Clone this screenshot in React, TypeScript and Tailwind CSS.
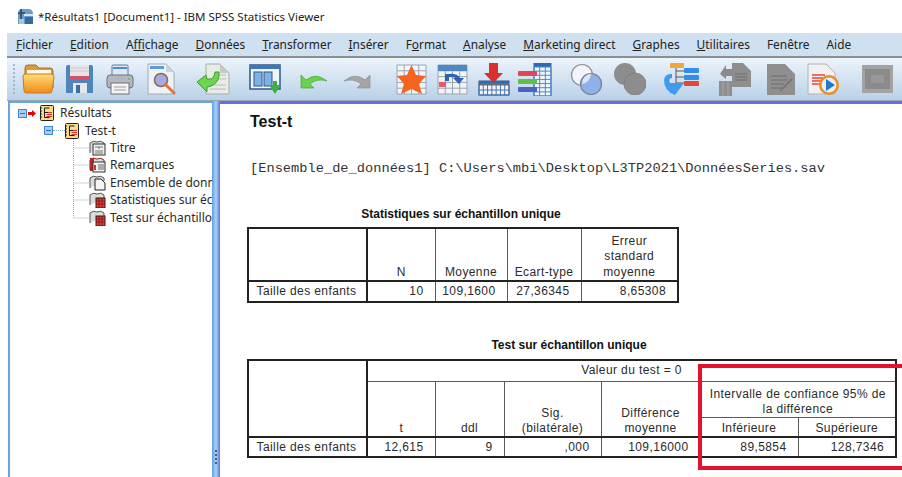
import React from "react";

const menus: [string, string, string][] = [
  ["", "F", "ichier"],
  ["", "E", "dition"],
  ["A", "f", "fichage"],
  ["", "D", "onnées"],
  ["", "T", "ransformer"],
  ["", "I", "nsérer"],
  ["F", "o", "rmat"],
  ["", "A", "nalyse"],
  ["", "M", "arketing direct"],
  ["", "G", "raphes"],
  ["", "U", "tilitaires"],
  ["Fenêtre", "", ""],
  ["Aide", "", ""],
];

const AppIcon = () => (
  <svg width="17" height="17" viewBox="0 0 17 17">
    <path d="M1 16 V5 Q1 1 6 1 H11 Q16 1 16 6 V16 Z" fill="#6f9cc0" />
    <path d="M1 5 H8 M4 1 V11" stroke="#1f4a72" strokeWidth="1.6" />
    <rect x="7" y="6" width="9" height="2" fill="#d6e6f2" />
    <rect x="8" y="9" width="8" height="7" fill="#2f6d9c" />
    <rect x="2" y="11" width="5" height="5" fill="#a9c6dc" />
  </svg>
);

const FolderIcon = () => (
  <svg width="33" height="30" viewBox="0 0 33 30">
    <defs>
      <linearGradient id="folderFront" x1="0" y1="0" x2="0" y2="1">
        <stop offset="0" stopColor="#ffdc7a" />
        <stop offset="1" stopColor="#f08a18" />
      </linearGradient>
    </defs>
    <path d="M3 24 V4 Q3 1 6 1 H14 L17 4 H28 Q31 4 31 7 V24 Z" fill="#d99a3a" stroke="#a8721f" />
    <rect x="5" y="6" width="24" height="6" fill="#fff8e8" />
    <path d="M1 12 Q1 10 4 10 H29 Q32 10 32 13 L30 27 Q30 29 27 29 H5 Q2 29 2 27 Z" fill="url(#folderFront)" stroke="#c97a1e" />
  </svg>
);

const SaveIcon = () => (
  <svg width="27" height="28" viewBox="0 0 27 28">
    <path d="M0 2 Q0 0 2 0 H25 Q27 0 27 2 V28 H0 Z" fill="#4f86b8" />
    <rect x="4" y="0" width="19" height="13" fill="#e6e6e6" />
    <path d="M4 3 H23 M4 6 H23" stroke="#c9c9c9" />
    <rect x="4" y="11" width="19" height="3" fill="#d8506a" />
    <rect x="7" y="18" width="14" height="10" fill="#e4e8ee" />
    <rect x="10" y="20" width="4" height="8" fill="#3d6f9e" />
  </svg>
);

const PrinterIcon = () => (
  <svg width="28" height="31" viewBox="0 0 28 31">
    <rect x="6" y="1" width="16" height="12" rx="1" fill="#dbe9f7" stroke="#5d7d9c" />
    <path d="M7 4 H21" stroke="#4d8fd0" strokeWidth="2" />
    <rect x="1" y="11" width="26" height="13" rx="3" fill="#b4b8bc" stroke="#6f7377" />
    <circle cx="23" cy="15" r="1" fill="#5fbf5f" />
    <rect x="5" y="19" width="18" height="11" fill="#f4f4f4" stroke="#6f7377" />
    <path d="M8 23 H20 M8 26 H20" stroke="#9a9a9a" />
  </svg>
);

const PreviewIcon = () => (
  <svg width="30" height="32" viewBox="0 0 30 32">
    <path d="M1 1 H19 L27 9 V31 H1 Z" fill="#eef2f6" stroke="#a3abb4" />
    <path d="M19 1 V9 H27 Z" fill="#cbd3dc" />
    <rect x="3" y="3" width="14" height="3" fill="#5a9bd8" />
    <circle cx="14" cy="17" r="6.5" fill="#a8a8e8" stroke="#8a6f50" strokeWidth="1.6" />
    <path d="M19 22 L27 30" stroke="#e2733a" strokeWidth="3" strokeLinecap="round" />
  </svg>
);

const ExportIcon = () => (
  <svg width="35" height="32" viewBox="0 0 35 32">
    <path d="M10 1 H24 L33 10 V31 H10 Z" fill="#e8ebe6" stroke="#a9ada6" />
    <path d="M24 1 V10 H33 Z" fill="#c6cac3" />
    <path d="M22 12 H30 M22 16 H30 M14 26 H30 M14 22 H30" stroke="#bcbcbc" />
    <path d="M1 19 L10 12 L11 16 H14 Q18 16 19 9 L23 9 Q24 18 17 22 Q14 24 11 24 L11 29 Z" fill="#6ed44f" stroke="#3aa02c" />
  </svg>
);

const WindowIcon = () => (
  <svg width="33" height="31" viewBox="0 0 33 31">
    <rect x="1" y="1" width="30" height="24" fill="#eef5fc" stroke="#31568a" strokeWidth="1.5" />
    <rect x="1" y="1" width="30" height="4" fill="#3f76b8" />
    <rect x="5" y="8" width="8" height="14" fill="#7fb2e6" stroke="#31568a" />
    <rect x="15" y="8" width="8" height="14" fill="#7fb2e6" stroke="#31568a" />
    <path d="M20 21 H24 V17 H28 V21 H32 L26 30 Z" fill="#3cb043" />
  </svg>
);

const UndoIcon = () => (
  <svg width="28" height="16" viewBox="0 0 28 16">
    <path d="M1 15 V2 L6 7 Q16 -1 27 8 Q17 5 10 11 L14 15 Z" fill="#67d24a" stroke="#46a832" strokeWidth="0.7" />
  </svg>
);

const RedoIcon = () => (
  <svg width="28" height="16" viewBox="0 0 28 16">
    <path d="M27 15 V2 L22 7 Q12 -1 1 8 Q11 5 18 11 L14 15 Z" fill="#a6a6a6" stroke="#8c8c8c" strokeWidth="0.7" />
  </svg>
);

// small grid shared by the table buttons
const GridLines = ({ x, y, w, h, cols, rows, stroke = "#7f93ad" }: { x: number; y: number; w: number; h: number; cols: number; rows: number; stroke?: string }) => (
  <g stroke={stroke} strokeWidth="1">
    {Array.from({ length: cols + 1 }, (_, i) => (
      <line key={`c${i}`} x1={x + (w / cols) * i} y1={y} x2={x + (w / cols) * i} y2={y + h} />
    ))}
    {Array.from({ length: rows + 1 }, (_, i) => (
      <line key={`r${i}`} x1={x} y1={y + (h / rows) * i} x2={x + w} y2={y + (h / rows) * i} />
    ))}
  </g>
);

const StarTableIcon = () => (
  <svg width="31" height="31" viewBox="0 0 31 31">
    <rect x="1" y="1" width="29" height="29" fill="#f2f4f6" />
    <GridLines x={1} y={1} w={29} h={29} cols={4} rows={5} stroke="#9aa5b2" />
    <path d="M15.5 1 L20 11 L30 12 L23 20 L26 30 L15.5 25 L5 30 L8 20 L1 12 L11 11 Z" fill="#f4641e" />
  </svg>
);

const SwapTableIcon = () => (
  <svg width="32" height="31" viewBox="0 0 32 31">
    <rect x="1" y="1" width="29" height="29" fill="#f2f4f6" />
    <GridLines x={1} y={1} w={29} h={29} cols={4} rows={5} stroke="#9aa5b2" />
    <rect x="1" y="1" width="29" height="6" fill="#4f86c6" />
    <rect x="2" y="18" width="7" height="5" fill="#ef5a6a" />
    <path d="M8 17 V10 H11 Q20 9 23 14 H27 L22 20 L16 14 H19 Q17 13 12 13 V17 Z" fill="#2f62b4" />
  </svg>
);

const ArrowTableIcon = () => (
  <svg width="32" height="33" viewBox="0 0 32 33">
    <rect x="1" y="18" width="30" height="14" fill="#f4f7fa" stroke="#2e5b96" />
    <rect x="1" y="18" width="30" height="4" fill="#2f68b4" />
    <GridLines x={1} y={22} w={30} h={10} cols={7} rows={2} stroke="#4273b4" />
    <path d="M11 0 H20 V10 H25 L15.5 20 L6 10 H11 Z" fill="#d8302a" />
    <path d="M0 21 H31" stroke="#9a6b3a" />
  </svg>
);

const BarsTableIcon = () => (
  <svg width="34" height="33" viewBox="0 0 34 33">
    <rect x="16" y="0" width="17" height="33" fill="#f0f6fc" stroke="#2f68b4" />
    <rect x="16" y="0" width="17" height="4" fill="#2f68b4" />
    <GridLines x={16} y={4} w={17} h={29} cols={3} rows={7} stroke="#4a8ad4" />
    <rect x="0" y="8" width="19" height="5" rx="1" fill="#e2455c" />
    <rect x="0" y="16" width="19" height="5" rx="1" fill="#5cc04a" />
    <rect x="0" y="24" width="19" height="5" rx="1" fill="#4a62c8" />
  </svg>
);

const CirclesIcon = () => (
  <svg width="33" height="32" viewBox="0 0 33 32">
    <circle cx="12" cy="12" r="10.5" fill="#f1f4fa" stroke="#8d8d8d" strokeWidth="1.2" />
    <circle cx="21" cy="21" r="10.5" fill="#8fb1ea" stroke="#7b7f8c" strokeWidth="1.2" />
    <path d="M12 21 A10.5 10.5 0 0 1 21 10.5 A10.5 10.5 0 0 1 12 21" fill="#dce6f7" />
  </svg>
);

const GreyCirclesIcon = () => (
  <svg width="32" height="32" viewBox="0 0 32 32">
    <circle cx="11" cy="11" r="11" fill="#8d8d8d" />
    <circle cx="21" cy="21" r="11" fill="#8d8d8d" stroke="#777" strokeWidth="0.7" />
  </svg>
);

const TreeIcon = () => (
  <svg width="35" height="33" viewBox="0 0 35 33">
    <rect x="6" y="0" width="14" height="5" rx="1" fill="#f0a63c" />
    <path d="M12 5 V20 M12 8 H20 M12 14 H20 M12 20 H20" stroke="#555" />
    <rect x="20" y="5" width="15" height="5" rx="1" fill="#2f8ef0" />
    <rect x="20" y="12" width="15" height="5" rx="1" fill="#2f8ef0" />
    <rect x="20" y="18" width="15" height="5" rx="1" fill="#e2453c" />
    <path d="M0 17 Q1 10 8 11 V15 Q4 15 6 20 H20 L11 32 Q0 28 0 17 Z" fill="#3f9bf0" />
  </svg>
);

const GreyReportIcon = () => (
  <svg width="33" height="33" viewBox="0 0 33 33">
    <path d="M14 0 H25 L33 8 V24 H14 Z" fill="#8e8e8e" />
    <path d="M2 11 L8 2 V6 H14 V13 H8 V16 Z" fill="#8a8a8a" />
    <rect x="1" y="18" width="13" height="15" fill="#8e8e8e" />
    <path d="M5 18 V33 M10 18 V33" stroke="#a9a9a9" />
    <path d="M17 11 H29 M17 14 H29 M17 17 H29" stroke="#6f6f6f" />
  </svg>
);

const GreyDocIcon = () => (
  <svg width="30" height="33" viewBox="0 0 30 33">
    <path d="M1 1 H19 L29 11 V32 H1 Z" fill="#8f8f8f" />
    <path d="M5 13 H21 M5 17 H21 M5 21 H18 M5 25 H16" stroke="#6c6c6c" />
    <path d="M14 28 L26 16" stroke="#777" strokeWidth="2" />
  </svg>
);

const PlayDocIcon = () => (
  <svg width="33" height="33" viewBox="0 0 33 33">
    <path d="M1 1 H19 L28 10 V31 H1 Z" fill="#f1f1f1" stroke="#b4b4b4" />
    <path d="M5 12 H18 M5 15 H20 M5 18 H14 M5 21 H14" stroke="#e2453c" strokeWidth="1.4" />
    <circle cx="22" cy="22" r="10" fill="#ee8a20" />
    <circle cx="22" cy="22" r="7.5" fill="#e8eef4" />
    <path d="M19 16 L28 22 L19 28 Z" fill="#1f7ad0" />
  </svg>
);

const GreyFrameIcon = () => (
  <svg width="31" height="28" viewBox="0 0 31 28">
    <rect x="0" y="0" width="31" height="28" fill="#a3a3a3" />
    <rect x="3" y="4" width="25" height="20" fill="#8b8b8b" />
    <rect x="9" y="10" width="13" height="8" fill="#979797" />
  </svg>
);

const OutlineBook = () => (
  <svg width="14" height="16" viewBox="0 0 14 16" className="shrink-0">
    <rect x="0.5" y="0.5" width="13" height="15" rx="1" fill="#f8dc8c" stroke="#222" />
    <path d="M1 3 H2 M1 6 H2 M1 9 H2 M1 12 H2" stroke="#222" />
    <path d="M4.5 3 H9.5 M4.5 3 V12.5 M4.5 7.5 H8 M4.5 12.5 H9.5" stroke="#1c1c1c" />
    <path d="M6.5 9.5 H12 M6.5 11.5 H12 M8 7.5 H12" stroke="#d8322c" />
  </svg>
);

const Expander = () => (
  <svg width="9" height="9" viewBox="0 0 9 9" className="shrink-0">
    <rect x="0.5" y="0.5" width="8" height="8" fill="#a9cdf0" stroke="#3f86cf" />
    <path d="M2 4.5 H7" stroke="#2d6fb8" />
  </svg>
);

const RedArrow = () => (
  <svg width="8" height="7" viewBox="0 0 8 7" className="shrink-0">
    <path d="M0 2 H4 V0 L8 3.5 L4 7 V5 H0 Z" fill="#f00000" />
  </svg>
);

// open-book base with a page or table laid over it
const LeafIcon = ({ kind }: { kind: "title" | "notes" | "log" | "table" }) => (
  <svg width="17" height="16" viewBox="0 0 17 16" className="shrink-0">
    <path d="M1 13 V3 Q4 0 8 2 Q12 0 15 3 V6" fill="#dcdcdc" stroke={kind === "notes" ? "#8a1c1c" : "#555"} />
    {kind === "title" && (
      <g>
        <rect x="4" y="4" width="12" height="11" fill="#efefef" stroke="#333" />
        <path d="M6 7 H14 M10 7 V9 M6 11 H14 M6 13 H14" stroke="#777" />
      </g>
    )}
    {kind === "notes" && (
      <g>
        <rect x="1" y="1" width="4" height="13" fill="#b3272a" />
        <rect x="4" y="5" width="12" height="10" fill="#f2f2f2" stroke="#333" />
        <path d="M6 8 V13" stroke="#d8322c" strokeWidth="2" />
        <path d="M9 8 H15 M9 10 H15 M9 12 H15" stroke="#666" />
      </g>
    )}
    {kind === "log" && <path d="M6 4 H12 L16 8 V15 H6 Z" fill="#f5f5f5" stroke="#222" />}
    {kind === "table" && (
      <g>
        <rect x="7" y="6" width="9" height="10" fill="#e23b36" stroke="#222" />
        <path d="M10 6 V16 M13 6 V16 M7 9 H16 M7 12 H16" stroke="#6d1412" strokeWidth="0.7" />
      </g>
    )}
  </svg>
);

const Connector = ({ last }: { last?: boolean }) => (
  <svg width="16" height="18" viewBox="0 0 16 18" className="shrink-0">
    <path d={last ? "M0.5 0 V9 H16" : "M0.5 0 V18 M0.5 9 H16"} stroke="#7fb0e2" strokeDasharray="1 1" fill="none" />
  </svg>
);

const leaves: { label: string; kind: "title" | "notes" | "log" | "table" }[] = [
  { label: "Titre", kind: "title" },
  { label: "Remarques", kind: "notes" },
  { label: "Ensemble de données actif", kind: "log" },
  { label: "Statistiques sur échantillon unique", kind: "table" },
  { label: "Test sur échantillon unique", kind: "table" },
];

const th = "border border-[#5a5a5a] px-[3px] align-bottom font-normal text-center";
const td = "border border-[#5a5a5a] border-t-2 border-t-[#222] pl-[4px] pr-[11px] text-right font-normal";
const rowHead = "border-r-2 border-r-[#222] border-t-2 border-t-[#222] pr-[2px] text-center font-normal whitespace-nowrap";

export default function App() {
  return (
    <div className="relative flex h-[477px] w-[902px] flex-col overflow-hidden bg-white font-['Noto_Sans',sans-serif] text-[12px] text-[#2b2b2b]">
      <div className="flex h-[33px] shrink-0 items-center gap-[4px] pl-[17px]">
        <AppIcon />
        <span className="text-[11.5px] text-[#222]">*Résultats1 [Document1] - IBM SPSS Statistics Viewer</span>
      </div>

      <div className="ml-[7px] flex h-[23px] shrink-0 items-center gap-[17px] bg-[#cfe0f0] pl-[9px] text-[11.9px] text-[#222]">
        {menus.map(([a, b, c]) => (
          <span key={a + b + c}>
            {a}
            <u>{b}</u>
            {c}
          </span>
        ))}
      </div>

      <div className="ml-[7px] flex h-[45px] shrink-0 items-center border-t-2 border-b border-t-[#8a8f96] border-b-[#9aa7b4] bg-gradient-to-b from-[#edf4fb] to-[#b9d1e8]">
        <div className="ml-[6px] h-[30px] w-0 border-l-2 border-dotted border-[#a9b6c4]" />
        <div className="ml-[7px]"><FolderIcon /></div>
        <div className="ml-[11px]"><SaveIcon /></div>
        <div className="ml-[13px]"><PrinterIcon /></div>
        <div className="ml-[13px]"><PreviewIcon /></div>
        <div className="ml-[19px]"><ExportIcon /></div>
        <div className="ml-[18px]"><WindowIcon /></div>
        <div className="ml-[18px] mt-[4px]"><UndoIcon /></div>
        <div className="ml-[15px] mt-[4px]"><RedoIcon /></div>
        <div className="ml-[25px]"><StarTableIcon /></div>
        <div className="ml-[10px]"><SwapTableIcon /></div>
        <div className="ml-[9px]"><ArrowTableIcon /></div>
        <div className="ml-[8px]"><BarsTableIcon /></div>
        <div className="ml-[18px]"><CirclesIcon /></div>
        <div className="ml-[11px]"><GreyCirclesIcon /></div>
        <div className="ml-[18px]"><TreeIcon /></div>
        <div className="ml-[19px]"><GreyReportIcon /></div>
        <div className="ml-[15px]"><GreyDocIcon /></div>
        <div className="ml-[11px]"><PlayDocIcon /></div>
        <div className="ml-[22px]"><GreyFrameIcon /></div>
      </div>

      <div className="flex min-h-0 flex-1 pl-[8px]">
        <div className="h-full w-[204px] shrink-0 overflow-hidden border-l-2 border-t-2 border-[#6aa5dc] bg-white pl-[8px] pt-[1px] text-[12px] leading-[18px]">
          <div className="flex h-[18px] items-center whitespace-nowrap">
            <Expander />
            <span className="ml-[1px]"><RedArrow /></span>
            <span className="ml-[4px]"><OutlineBook /></span>
            <span className="ml-[6px]">Résultats</span>
          </div>
          <div className="flex h-[17px] items-center whitespace-nowrap pl-[26px]">
            <Expander />
            <span className="w-[12px] border-t border-dotted border-[#7fb0e2]" />
            <OutlineBook />
            <span className="ml-[6px]">Test-t</span>
          </div>
          {leaves.map((leaf, i) => (
            <div key={leaf.label} className="flex h-[17.5px] items-center whitespace-nowrap pl-[55px]">
              <Connector last={i === leaves.length - 1} />
              <LeafIcon kind={leaf.kind} />
              <span className="ml-[4px]">{leaf.label}</span>
            </div>
          ))}
        </div>

        <div className="relative h-full w-[8px] shrink-0 bg-gradient-to-r from-[#5f9fe0] via-[#a6d4f5] to-[#6a6ee0]">
          <div className="absolute left-[3px] top-[349px] h-[14px] w-[2px] border-l-2 border-dotted border-[#4a5f80]" />
        </div>

        <div className="min-w-0 flex-1 border-t-[3px] border-[#6a6ee0] bg-white pl-[27px] pt-[8px] font-['Liberation_Sans',sans-serif]">
          <h1 className="ml-[3px] text-[16px] font-bold leading-[20px] text-[#111]">Test-t</h1>
          <p className="ml-[3px] mt-[29px] whitespace-nowrap font-['Liberation_Mono',monospace] text-[13.7px] leading-[16px] text-[#333]">
            [Ensemble_de_données1] C:\Users\mbi\Desktop\L3TP2021\DonnéesSeries.sav
          </p>

          <h2 className="mt-[30px] w-[428px] text-center text-[12px] font-bold leading-[14px] text-[#111]">Statistiques sur échantillon unique</h2>
          <table className="mt-[6px] w-[430px] table-fixed border-collapse border-2 border-[#222] text-[12px] leading-[15.5px] tracking-[0.4px]">
            <colgroup>
              <col className="w-[119px]" />
              <col className="w-[68px]" />
              <col className="w-[72px]" />
              <col className="w-[74px]" />
              <col className="w-[97px]" />
            </colgroup>
            <tbody>
              <tr className="h-[53px]">
                <th className="border-r-2 border-r-[#222]" />
                <th className={th}>N</th>
                <th className={th}>Moyenne</th>
                <th className={th}>Ecart-type</th>
                <th className={th}>Erreur<br />standard<br />moyenne</th>
              </tr>
              <tr className="h-[21px]">
                <th className={rowHead}>Taille des enfants</th>
                <td className={td}>10</td>
                <td className={td}>109,1600</td>
                <td className={td}>27,36345</td>
                <td className={td}>8,65308</td>
              </tr>
            </tbody>
          </table>

          <h2 className="mt-[35px] w-[644px] text-center text-[12px] font-bold leading-[14px] text-[#111]">Test sur échantillon unique</h2>
          <table className="mt-[7px] w-[648px] table-fixed border-collapse border-2 border-[#222] text-[12px] leading-[15px] tracking-[0.4px]">
            <colgroup>
              <col className="w-[119px]" />
              <col className="w-[68px]" />
              <col className="w-[69px]" />
              <col className="w-[97px]" />
              <col className="w-[99px]" />
              <col className="w-[98px]" />
              <col className="w-[98px]" />
            </colgroup>
            <tbody>
              <tr className="h-[21px]">
                <th rowSpan={3} className="border-r-2 border-r-[#222]" />
                <th colSpan={6} className="border border-[#5a5a5a] px-[3px] text-center align-middle font-normal">Valeur du test = 0</th>
              </tr>
              <tr className="h-[36px]">
                <th rowSpan={2} className={th}>t</th>
                <th rowSpan={2} className={th}>ddl</th>
                <th rowSpan={2} className={th}>Sig.<br />(bilatérale)</th>
                <th rowSpan={2} className={th}>Différence<br />moyenne</th>
                <th colSpan={2} className={th}>Intervalle de confiance 95% de<br />la différence</th>
              </tr>
              <tr className="h-[20px]">
                <th className={th}>Inférieure</th>
                <th className={th}>Supérieure</th>
              </tr>
              <tr className="h-[20px]">
                <th className={rowHead}>Taille des enfants</th>
                <td className={td}>12,615</td>
                <td className={td}>9</td>
                <td className={td}>,000</td>
                <td className={td}>109,16000</td>
                <td className={td}>89,5854</td>
                <td className={td}>128,7346</td>
              </tr>
            </tbody>
          </table>
        </div>
      </div>

      {/* highlight around the confidence interval columns, open on the right */}
      <div className="absolute left-[698px] top-[364px] h-[106px] w-[210px] border-4 border-[#e8112d]" />
    </div>
  );
}
